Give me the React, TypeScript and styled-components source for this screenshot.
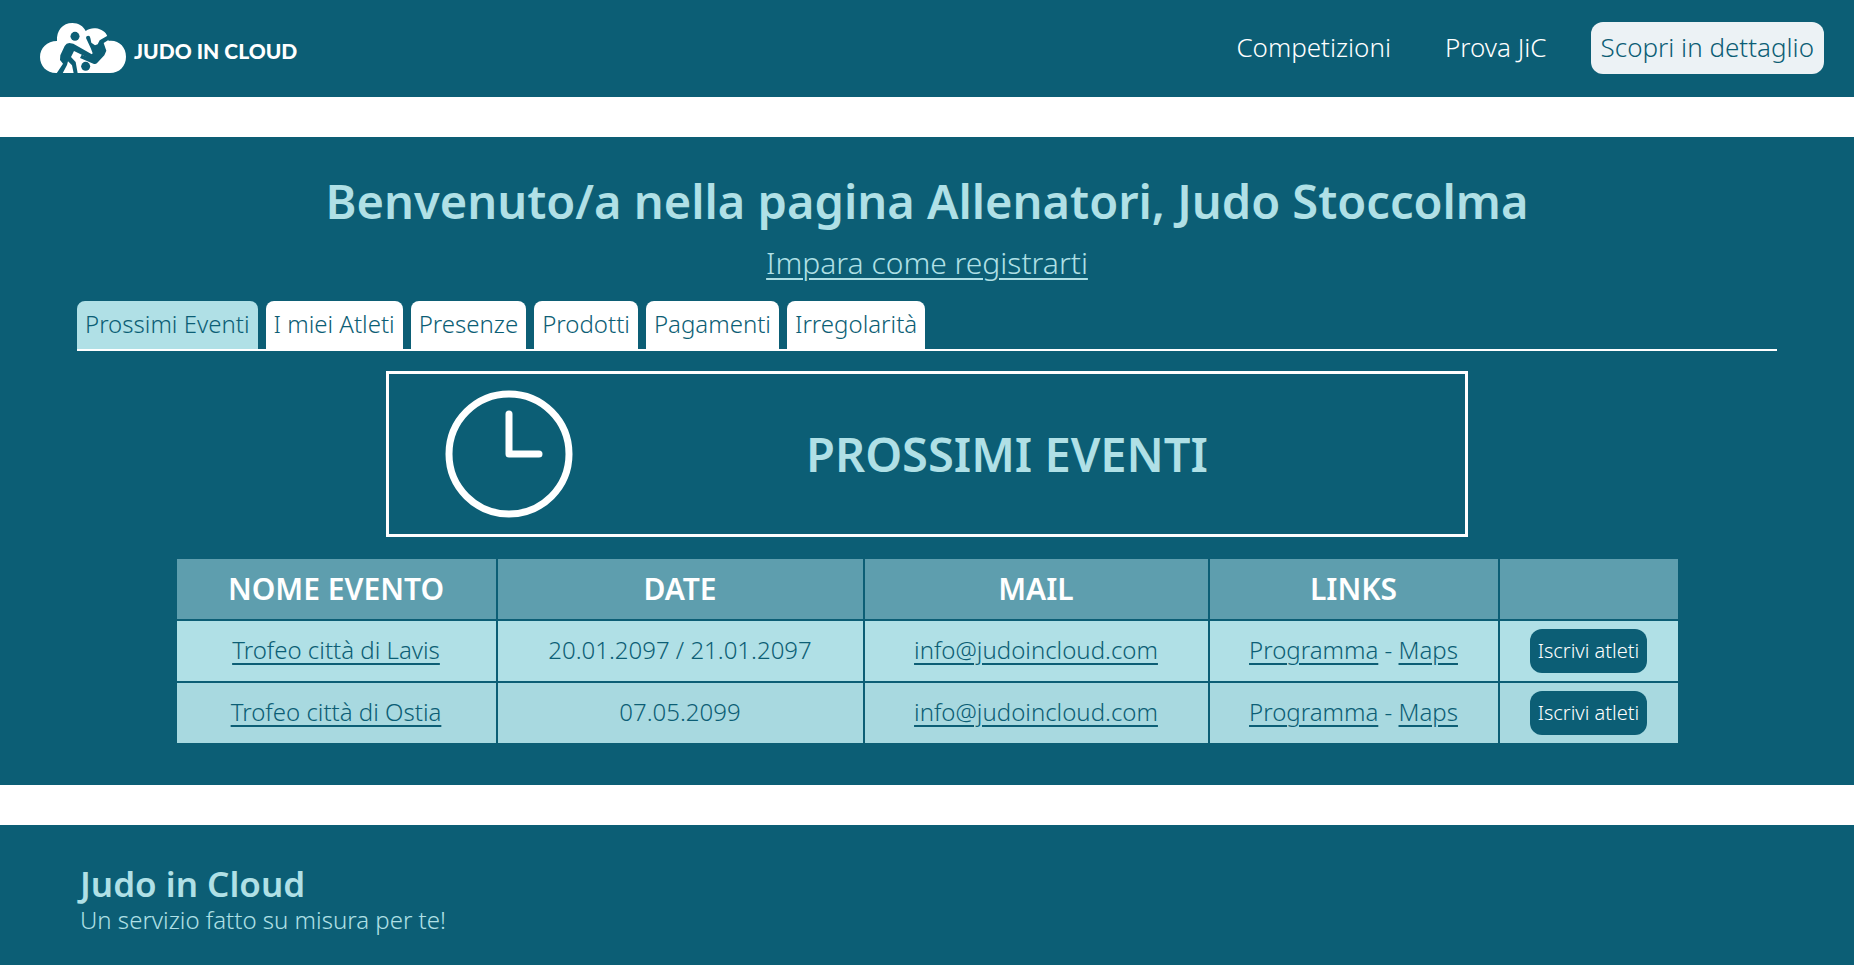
import React from 'react';
import styled, { createGlobalStyle, css } from 'styled-components';

const color = {
  teal: '#0c5e75',
  powder: '#b0e0e6',
  powderDark: '#a8d9e0',
  head: '#5e9eae',
  mist: '#ecf2f5',
  white: '#ffffff',
};

const GlobalStyle = createGlobalStyle`
  *, *::before, *::after { box-sizing: border-box; }
  body {
    margin: 0;
    background: ${color.white};
    color: ${color.teal};
    font-family: "Noto Sans", "Open Sans", sans-serif;
    font-weight: 300;
    font-size: 24px;
  }
  h1, h2, p { margin: 0; }
  button { font: inherit; border: 0; cursor: pointer; }
`;

const Page = styled.div`
  min-height: 100vh;
  display: flex;
  flex-direction: column;
  gap: 40px;
`;

const Header = styled.header`
  display: flex;
  justify-content: space-between;
  align-items: flex-start;
  padding: 22px 30px 23px 40px;
  background: ${color.teal};
`;

const Brand = styled.a`
  display: flex;
  align-items: center;
  gap: 8px;
  color: ${color.white};
  text-decoration: none;
`;

const CloudMark = styled.svg`
  display: block;
  width: 86px;
  height: 52px;
`;

const BrandName = styled.span`
  padding-top: 6px;
  font-family: Lato, sans-serif;
  font-weight: 900;
  font-size: 21px;
  line-height: 24px;
`;

const Menu = styled.nav`
  display: flex;
  gap: 34px;
`;

const MenuLink = styled.a<{ $filled?: boolean }>`
  padding: 7px 10px 9px;
  border-radius: 12px;
  font-size: 26px;
  line-height: 36px;
  text-decoration: none;
  color: ${(p) => (p.$filled ? color.teal : color.white)};
  background: ${(p) => (p.$filled ? color.mist : 'transparent')};
`;

const Main = styled.main`
  display: flex;
  flex-direction: column;
  align-items: center;
  padding: 34px 77px 40px;
  background: ${color.teal};
`;

const Welcome = styled.h1`
  color: ${color.powder};
  font-weight: 600;
  font-size: 47px;
  line-height: 60px;
  text-align: center;
`;

const underline = css`
  text-decoration: underline;
  text-decoration-thickness: 2px;
  text-underline-offset: 4px;
`;

const LearnLink = styled.a`
  ${underline}
  margin: 12px 0 18px;
  color: ${color.powder};
  font-size: 30px;
  line-height: 40px;
`;

const TabBar = styled.div`
  display: flex;
  gap: 8px;
  width: 100%;
  border-bottom: 2px solid ${color.white};
`;

const Tab = styled.button<{ $active?: boolean }>`
  padding: 6px 8px 8px;
  border-radius: 8px 8px 0 0;
  line-height: 34px;
  color: ${color.teal};
  background: ${(p) => (p.$active ? color.powder : color.white)};
`;

const Banner = styled.section`
  display: grid;
  grid-template-columns: 240px 1fr 80px;
  align-items: center;
  width: 100%;
  max-width: 1082px;
  margin: 20px 0;
  padding: 16px 0;
  border: 3px solid ${color.white};
`;

const Clock = styled.svg`
  justify-self: center;
  width: 128px;
  height: 128px;
`;

const BannerTitle = styled.h2`
  color: ${color.powder};
  font-weight: 600;
  font-size: 47px;
  line-height: 60px;
  text-align: center;
`;

const Events = styled.table`
  width: 100%;
  max-width: 1505px;
  table-layout: fixed;
  border-spacing: 2px;
  text-align: center;
`;

const Col = styled.col<{ $width: number }>`
  width: ${(p) => p.$width}px;
`;

const HeadCell = styled.th`
  height: 60px;
  padding: 0;
  background: ${color.head};
  color: ${color.white};
  font-weight: 600;
  font-size: 30px;
  line-height: 40px;
`;

const Row = styled.tr`
  background: ${color.powder};
  &:nth-child(even) { background: ${color.powderDark}; }
`;

const Cell = styled.td`
  height: 60px;
  padding: 7px 0 9px;
  line-height: 34px;
`;

const ActionCell = styled(Cell)`
  padding: 8px 0;
`;

const TextLink = styled.a`
  ${underline}
  color: ${color.teal};
`;

const Enroll = styled.button`
  display: block;
  margin: 0 auto;
  padding: 8px;
  border-radius: 12px;
  background: ${color.teal};
  color: ${color.white};
  font-size: 20px;
  line-height: 28px;
`;

const Footer = styled.footer`
  flex: 1;
  padding: 39px 80px;
  background: ${color.teal};
  color: ${color.powder};
`;

const FooterTitle = styled.h2`
  font-weight: 600;
  font-size: 35px;
  line-height: 40px;
`;

const FooterText = styled.p`
  line-height: 32px;
`;

const tabs = ['Prossimi Eventi', 'I miei Atleti', 'Presenze', 'Prodotti', 'Pagamenti', 'Irregolarità'];

const events = [
  { name: 'Trofeo città di Lavis', date: '20.01.2097 / 21.01.2097', mail: 'info@judoincloud.com' },
  { name: 'Trofeo città di Ostia', date: '07.05.2099', mail: 'info@judoincloud.com' },
];

function Logo() {
  return (
    <CloudMark viewBox="30 36 258 156" aria-hidden="true">
      <path
        fill={color.white}
        d="M78 189C50 189 30 168 30 141C30 114 51 93 81 93C79 62 98 39 127 39C146 39 160 48 167 63C176 56 187 54 197 55C214 57 228 66 232 79L236 93C266 89 288 111 288 140C288 168 268 189 240 189Z"
      />
      <g fill={color.teal}>
        <circle cx="135" cy="79" r="13.5" />
        <circle cx="167" cy="169" r="13.5" />
        {/* standing judoka with the throwing arm */}
        <path d="M80 190L99 161L90 150L91 136L104 108Q109 99 118 99L130 101L188 134L180 146L132 123L123 141L137 156L143 190H131L126 166L114 154L111 165L98 190Z" />
        {/* judoka being thrown */}
        <path d="M188 130L182 114L168 84Q168 77 175 77Q180 77 181 84L184 98L195 106L203 103L209 91L235 76L240 87L221 99L229 122L223 136L202 158Q197 164 190 161L150 144L155 134L176 142Z" />
      </g>
    </CloudMark>
  );
}

export default function App() {
  return (
    <>
      <GlobalStyle />
      <Page>
        <Header>
          <Brand href="#">
            <Logo />
            <BrandName>JUDO IN CLOUD</BrandName>
          </Brand>
          <Menu>
            <MenuLink href="#">Competizioni</MenuLink>
            <MenuLink href="#">Prova JiC</MenuLink>
            <MenuLink href="#" $filled>Scopri in dettaglio</MenuLink>
          </Menu>
        </Header>

        <Main>
          <Welcome>Benvenuto/a nella pagina Allenatori, Judo Stoccolma</Welcome>
          <LearnLink href="#">Impara come registrarti</LearnLink>
          <TabBar role="tablist">
            {tabs.map((label, i) => (
              <Tab key={label} type="button" role="tab" aria-selected={i === 0} $active={i === 0}>
                {label}
              </Tab>
            ))}
          </TabBar>

          <Banner>
            <Clock viewBox="0 0 128 128" fill="none" stroke={color.white} aria-hidden="true">
              <circle cx="64" cy="64" r="60" strokeWidth="7" />
              <path d="M64 24V64H94" strokeWidth="7" strokeLinecap="round" strokeLinejoin="round" />
            </Clock>
            <BannerTitle>PROSSIMI EVENTI</BannerTitle>
          </Banner>

          <Events>
            <colgroup>
              <Col $width={319} />
              <Col $width={365} />
              <Col $width={343} />
              <Col $width={288} />
              <Col $width={178} />
            </colgroup>
            <thead>
              <tr>
                <HeadCell scope="col">NOME EVENTO</HeadCell>
                <HeadCell scope="col">DATE</HeadCell>
                <HeadCell scope="col">MAIL</HeadCell>
                <HeadCell scope="col">LINKS</HeadCell>
                <HeadCell as="td" />
              </tr>
            </thead>
            <tbody>
              {events.map((event) => (
                <Row key={event.name}>
                  <Cell><TextLink href="#">{event.name}</TextLink></Cell>
                  <Cell>{event.date}</Cell>
                  <Cell><TextLink href={`mailto:${event.mail}`}>{event.mail}</TextLink></Cell>
                  <Cell>
                    <TextLink href="#">Programma</TextLink> - <TextLink href="#">Maps</TextLink>
                  </Cell>
                  <ActionCell><Enroll type="button">Iscrivi atleti</Enroll></ActionCell>
                </Row>
              ))}
            </tbody>
          </Events>
        </Main>

        <Footer>
          <FooterTitle>Judo in Cloud</FooterTitle>
          <FooterText>Un servizio fatto su misura per te!</FooterText>
        </Footer>
      </Page>
    </>
  );
}
